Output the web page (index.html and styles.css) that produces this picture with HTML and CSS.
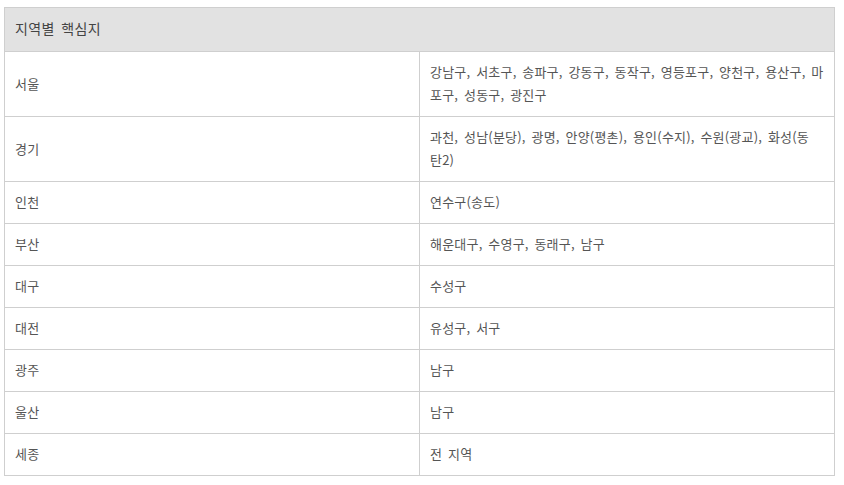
FILE: index.html
```html
<!DOCTYPE html>
<html lang="ko">
<head>
<meta charset="utf-8">
<link rel="stylesheet" href="styles.css">
</head>
<body>
<table class="region-table">
  <thead>
    <tr><th colspan="2">지역별 핵심지</th></tr>
  </thead>
  <tbody>
    <tr><td class="name">서울</td><td class="areas">강남구, 서초구, 송파구, 강동구, 동작구, 영등포구, 양천구, 용산구, 마포구, 성동구, 광진구</td></tr>
    <tr><td class="name">경기</td><td class="areas narrow">과천, 성남(분당), 광명, 안양(평촌), 용인(수지), 수원(광교), 화성(동탄2)</td></tr>
    <tr><td class="name">인천</td><td class="areas">연수구(송도)</td></tr>
    <tr><td class="name">부산</td><td class="areas">해운대구, 수영구, 동래구, 남구</td></tr>
    <tr><td class="name">대구</td><td class="areas">수성구</td></tr>
    <tr><td class="name">대전</td><td class="areas">유성구, 서구</td></tr>
    <tr><td class="name">광주</td><td class="areas">남구</td></tr>
    <tr><td class="name">울산</td><td class="areas">남구</td></tr>
    <tr><td class="name">세종</td><td class="areas">전 지역</td></tr>
  </tbody>
</table>
</body>
</html>
```
FILE: styles.css
```css
html, body {
  margin: 0;
  padding: 0;
  background: #fff;
}
body {
  padding: 7px 9px 0 4px;
  font-family: "Noto Sans CJK KR", "Noto Sans", sans-serif;
  font-size: 13px;
  color: #555;
  letter-spacing: 0.2px;
  word-spacing: 2px;
}
.region-table {
  width: 831px;
  border-collapse: collapse;
  table-layout: fixed;
}
.region-table th {
  background: #e2e2e2;
  border: 1px solid #cfcfcf;
  text-align: left;
  font-weight: normal;
  font-size: 14px;
  letter-spacing: 0.4px;
  color: #444;
  padding: 9px 10px 11px;
  line-height: 23px;
}
.region-table td {
  border: 1px solid #cfcfcf;
  padding: 8px 10px 10px;
  line-height: 23px;
  vertical-align: middle;
}
.region-table td.name {
  width: 394px;
}
.region-table td.narrow {
  padding-right: 18px;
}
```
